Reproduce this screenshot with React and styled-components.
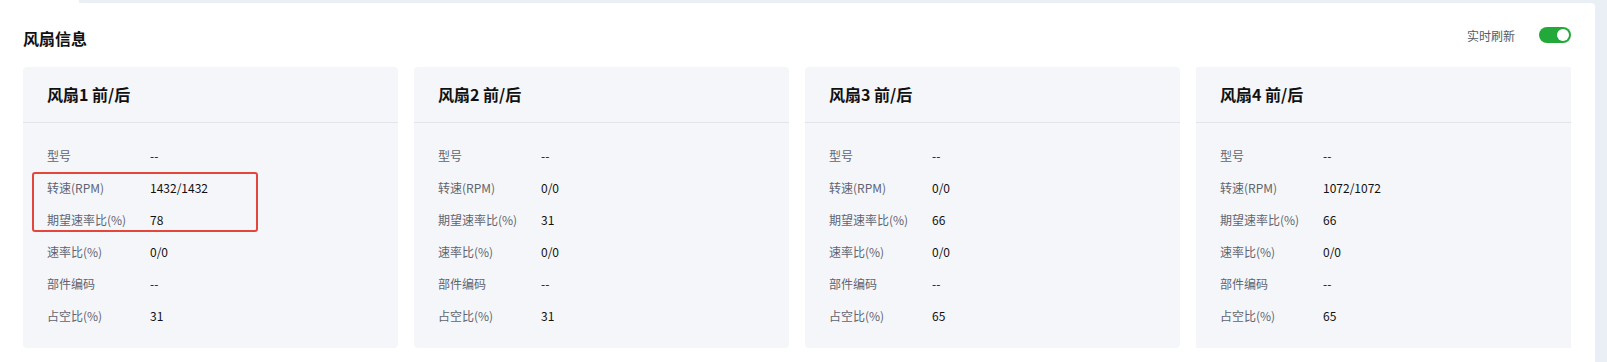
import styled, { createGlobalStyle } from "styled-components";

const GlobalStyle = createGlobalStyle`
  html, body { margin: 0; padding: 0; }
  body {
    background: #eaeef5;
    font-family: "Noto Sans CJK SC", "Noto Sans", sans-serif;
    color: #1f1f1f;
  }
`;

const Page = styled.div`
  width: 1607px;
  height: 362px;
  overflow: hidden;
  display: flex;
  flex-direction: column;
`;

const TabStrip = styled.div`
  display: flex;
  height: 3px;
`;

const ActiveTab = styled.div`
  width: 79px;
  background: #ffffff;
`;

const Panel = styled.div`
  flex: 1;
  margin-right: 12px;
  background: #ffffff;
  border-radius: 0 4px 0 0;
  padding: 20px 24px 0 23px;
`;

const Header = styled.div`
  height: 32px;
  display: flex;
  align-items: center;
  justify-content: space-between;
  margin-bottom: 12px;
`;

const Title = styled.div`
  font-size: 16px;
  font-weight: 700;
  color: #111;
  margin-bottom: 2px;
`;

const Refresh = styled.div`
  display: flex;
  align-items: center;
  gap: 24px;
  margin-bottom: 8px;
  font-size: 12px;
  color: #555a63;
`;

const Switch = styled.div`
  width: 32px;
  height: 16px;
  border-radius: 8px;
  background: #22a93a;
  display: flex;
  align-items: center;
  justify-content: flex-end;
  padding: 0 2px;
  box-sizing: border-box;
`;

const Knob = styled.div`
  width: 12px;
  height: 12px;
  border-radius: 50%;
  background: #ffffff;
`;

const Cards = styled.div`
  display: grid;
  grid-template-columns: repeat(4, 375px);
  gap: 16px;
`;

const Card = styled.div`
  position: relative;
  background: #f5f6f9;
  border-radius: ${({ $square }) => ($square ? "0" : "4px")};
  height: 281px;
  display: flex;
  flex-direction: column;
`;

const CardHead = styled.div`
  height: 56px;
  box-sizing: border-box;
  display: flex;
  align-items: center;
  padding: 0 0 2px 24px;
  border-bottom: 1px solid #e2e4ec;
  font-size: 16px;
  font-weight: 700;
  color: #111;
`;

const CardBody = styled.div`
  position: relative;
  padding: 16px 24px 16px;
`;

const Row = styled.div`
  height: 32px;
  display: grid;
  grid-template-columns: 103px 1fr;
  align-items: center;
  font-size: 12px;
`;

const Label = styled.span`
  color: #5f6470;
`;

const Value = styled.span`
  color: #111;
`;

const Highlight = styled.div`
  position: absolute;
  left: 9px;
  top: 49px;
  width: 226px;
  height: 60px;
  box-sizing: border-box;
  border: 2px solid #e5463b;
  border-radius: 3px;
  pointer-events: none;
`;

const fans = [
  { name: "风扇1 前/后", rpm: "1432/1432", want: "78", duty: "31", mark: true },
  { name: "风扇2 前/后", rpm: "0/0", want: "31", duty: "31" },
  { name: "风扇3 前/后", rpm: "0/0", want: "66", duty: "65" },
  { name: "风扇4 前/后", rpm: "1072/1072", want: "66", duty: "65", square: true },
];

const FanCard = ({ fan }) => {
  const rows = [
    ["型号", "--"],
    ["转速(RPM)", fan.rpm],
    ["期望速率比(%)", fan.want],
    ["速率比(%)", "0/0"],
    ["部件编码", "--"],
    ["占空比(%)", fan.duty],
  ];
  return (
    <Card $square={fan.square}>
      <CardHead>{fan.name}</CardHead>
      <CardBody>
        {rows.map(([k, v]) => (
          <Row key={k}>
            <Label>{k}</Label>
            <Value>{v}</Value>
          </Row>
        ))}
        {fan.mark && <Highlight />}
      </CardBody>
    </Card>
  );
};

export default function App() {
  return (
    <Page>
      <GlobalStyle />
      <TabStrip>
        <ActiveTab />
      </TabStrip>
      <Panel>
        <Header>
          <Title>风扇信息</Title>
          <Refresh>
            实时刷新
            <Switch>
              <Knob />
            </Switch>
          </Refresh>
        </Header>
        <Cards>
          {fans.map((f) => (
            <FanCard key={f.name} fan={f} />
          ))}
        </Cards>
      </Panel>
    </Page>
  );
}
